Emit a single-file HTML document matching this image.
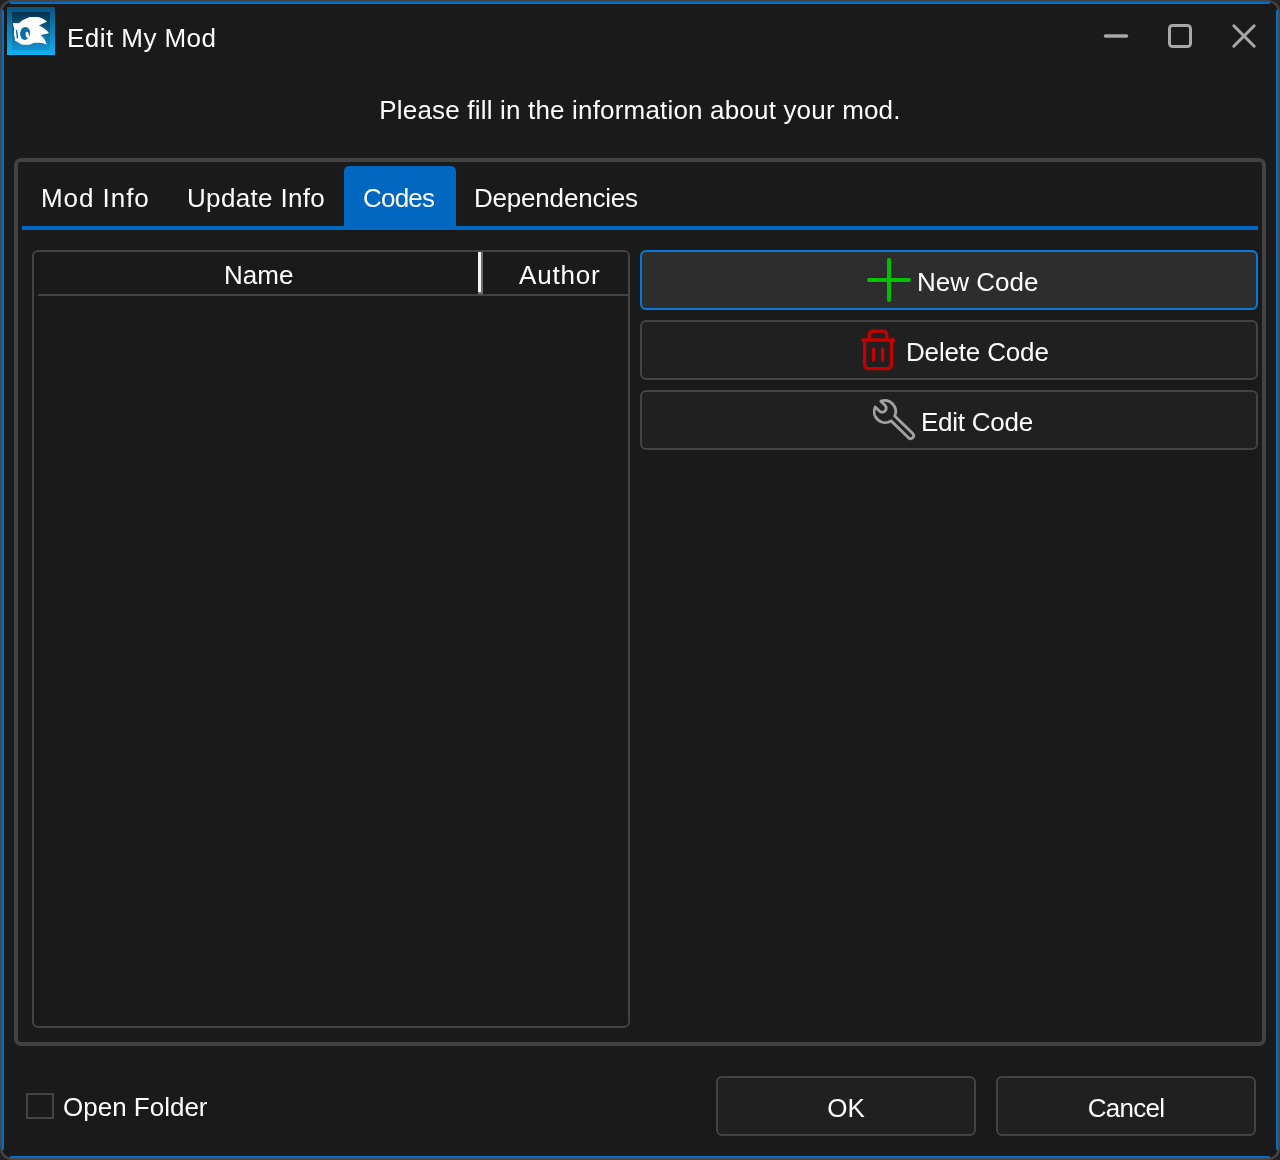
<!DOCTYPE html>
<html><head><meta charset="utf-8">
<style>
html,body{margin:0;padding:0;width:1280px;height:1160px;overflow:hidden;background:#232323;}
body{position:relative;font-family:"Liberation Sans",sans-serif;color:#fff;}
.abs{position:absolute;}
#win{position:absolute;left:0;top:0;width:1280px;height:1160px;border-radius:12px;background:#474747;}
#win2{position:absolute;left:2px;top:2px;width:1276px;height:1156px;border-radius:10px;background:#1a1a1a;}
.bl{position:absolute;background:#006ecc;}
.t{position:absolute;white-space:pre;font-size:26px;line-height:30px;height:30px;color:#fff;will-change:transform;}
.btn{position:absolute;box-sizing:border-box;border:2px solid #434343;border-radius:6px;background:#202020;}
</style></head>
<body>
<div id="win"><div id="win2"></div></div>
<div class="bl" style="left:10px;top:2px;width:1260px;height:2px;"></div>
<div class="bl" style="left:10px;top:1156px;width:1260px;height:2px;"></div>
<div class="bl" style="left:2px;top:10px;width:2px;height:1140px;"></div>
<div class="bl" style="left:1276px;top:10px;width:2px;height:1140px;"></div>

<!-- app icon -->
<svg class="abs" style="left:7px;top:7px" width="48" height="48" viewBox="0 0 48 48">
 <defs>
  <linearGradient id="g1" x1="0" y1="0" x2="0" y2="1"><stop offset="0" stop-color="#0a547e"/><stop offset="1" stop-color="#12b0f2"/></linearGradient>
  <linearGradient id="g2" x1="0" y1="0" x2="0" y2="1"><stop offset="0" stop-color="#05324c"/><stop offset="1" stop-color="#1594d2"/></linearGradient>
 </defs>
 <rect x="0" y="0" width="48" height="48" fill="url(#g1)"/>
 <rect x="5" y="5" width="38" height="38" fill="url(#g2)"/>
 <path d="M5.9 16 L12.2 16.3 L12.5 15.5 Q16 12.6 22.7 10.1 L31.5 9.9 Q36 11 40.1 14.5 L31.9 18.6 Q37.5 20.5 42 26.3 L33.7 28.1 Q37.6 31 39.7 37.8 Q37 36 32 35.8 L27.6 35.8 Q25 36.3 22.7 37.8 L15.5 37.8 Q13 37 12.5 36.2 L7.9 33.5 L7.9 31.2 Q6.7 28 6.9 26 Q7.2 22 7.3 21.4 L6 18.1 Z" fill="#fff"/>
 <path d="M8.7 22.8 L10.2 23 L11.3 31.5 L9.8 31.6 Z" fill="#0b6ea6"/>
 <ellipse cx="18.1" cy="26.4" rx="5" ry="6.5" transform="rotate(8 18.1 26.4)" fill="#0a6ea6"/>
 <ellipse cx="20.3" cy="28" rx="1.6" ry="3.2" transform="rotate(-10 20.3 28)" fill="#fff"/>
</svg>

<div class="t" style="left:67px;top:23px;letter-spacing:0.45px;">Edit My Mod</div>

<!-- title buttons -->
<svg class="abs" style="left:1096px;top:16px" width="170" height="40" viewBox="1096 16 170 40">
 <line x1="1105.5" y1="36" x2="1126.5" y2="36" stroke="#a8a8a8" stroke-width="3.5" stroke-linecap="round"/>
 <rect x="1169.5" y="25.5" width="21" height="21" rx="3" fill="none" stroke="#a8a8a8" stroke-width="3"/>
 <line x1="1233.8" y1="25.8" x2="1254.2" y2="46.2" stroke="#a8a8a8" stroke-width="3" stroke-linecap="round"/>
 <line x1="1254.2" y1="25.8" x2="1233.8" y2="46.2" stroke="#a8a8a8" stroke-width="3" stroke-linecap="round"/>
</svg>

<div class="t" style="left:0;width:1280px;text-align:center;top:95px;letter-spacing:0.18px;">Please fill in the information about your mod.</div>

<!-- group box -->
<div class="abs" style="left:14px;top:158px;width:1244px;height:880px;border:4px solid #424242;border-radius:7px;"></div>

<!-- tabs -->
<div class="abs" style="left:344px;top:166px;width:112px;height:62px;background:#0067c0;border-radius:5px 5px 0 0;"></div>
<div class="abs" style="left:22px;top:226px;width:1236px;height:4px;background:#0067c0;"></div>
<div class="t" style="left:41px;top:183px;letter-spacing:0.95px;">Mod Info</div>
<div class="t" style="left:187px;top:183px;letter-spacing:0.34px;">Update Info</div>
<div class="t" style="left:363px;top:183px;letter-spacing:-0.8px;">Codes</div>
<div class="t" style="left:474px;top:183px;letter-spacing:-0.2px;">Dependencies</div>

<!-- list -->
<div class="abs" style="left:32px;top:250px;width:594px;height:774px;border:2px solid #434343;border-radius:6px;"></div>
<div class="abs" style="left:38px;top:294px;width:590px;height:2px;background:#434343;"></div>
<div class="abs" style="left:478px;top:252px;width:5px;height:42px;background:#6e6e6e;"></div>
<div class="abs" style="left:478px;top:252px;width:3px;height:40px;background:#f4f4f4;"></div>
<div class="t" style="left:224px;top:260px;">Name</div>
<div class="t" style="left:519px;top:260px;letter-spacing:0.8px;">Author</div>

<!-- buttons -->
<div class="btn" style="left:640px;top:250px;width:618px;height:60px;border-color:#0a78d8;background:#2d2d2d;"></div>
<div class="btn" style="left:640px;top:320px;width:618px;height:60px;"></div>
<div class="btn" style="left:640px;top:390px;width:618px;height:60px;"></div>

<svg class="abs" style="left:860px;top:254px" width="60" height="52" viewBox="860 254 60 52">
 <line x1="869" y1="280" x2="909" y2="280" stroke="#00c000" stroke-width="4" stroke-linecap="round"/>
 <line x1="889" y1="260" x2="889" y2="300" stroke="#00c000" stroke-width="4" stroke-linecap="round"/>
</svg>
<div class="t" style="left:917px;top:267px;">New Code</div>

<svg class="abs" style="left:855px;top:325px" width="50" height="50" viewBox="855 325 50 50">
 <path d="M862.6 340 H893.6 M864.6 340 V363.7 Q864.6 368.7 869.6 368.7 H886.5 Q891.5 368.7 891.5 363.7 V340 M869.3 340 V335.3 Q869.3 331.1 873.5 331.1 H882.6 Q886.8 331.1 886.8 335.3 V340 M873.5 349 V360 M882.6 349 V360" fill="none" stroke="#c40000" stroke-width="3.3" stroke-linecap="round" stroke-linejoin="round"/>
</svg>
<div class="t" style="left:906px;top:337px;letter-spacing:-0.17px;">Delete Code</div>

<svg class="abs" style="left:866px;top:394px" width="56" height="52" viewBox="866 394 56 52">
 <path d="M880.8 401.2 A11 11 0 0 1 894.7 416 L913 433.8 A3 3 0 0 1 908.8 438 L891.1 420.9 A11 11 0 0 1 875.2 407 L879.4 411 A4 4 0 0 0 885 405.2 Z" fill="none" stroke="#a0a0a0" stroke-width="2.9" stroke-linejoin="round"/>
</svg>
<div class="t" style="left:921px;top:407px;letter-spacing:-0.25px;">Edit Code</div>

<!-- bottom -->
<div class="abs" style="left:26px;top:1093px;width:24px;height:22px;border:2px solid #444;"></div>
<div class="t" style="left:63px;top:1092px;">Open Folder</div>
<div class="btn" style="left:716px;top:1076px;width:260px;height:60px;"></div>
<div class="t" style="left:716px;width:260px;text-align:center;top:1093px;">OK</div>
<div class="btn" style="left:996px;top:1076px;width:260px;height:60px;"></div>
<div class="t" style="left:996px;width:260px;text-align:center;top:1093px;letter-spacing:-0.7px;">Cancel</div>
</body></html>
